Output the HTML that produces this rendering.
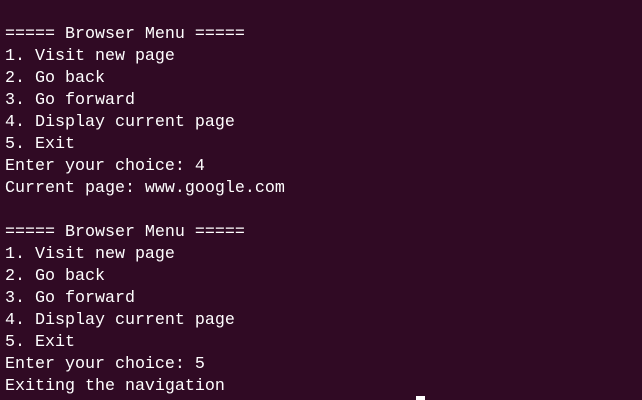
<!DOCTYPE html>
<html><head><meta charset="utf-8"><style>
html,body{margin:0;padding:0;background:#300a24;width:642px;height:400px;overflow:hidden}
pre{margin:0;padding:24px 0 0 5px;font-family:"Liberation Mono","DejaVu Sans Mono",monospace;font-size:16.67px;line-height:22px;color:#ffffff}
.cur{position:absolute;left:416px;top:396px;width:9px;height:4px;background:#fff}
</style></head><body>
<pre>===== Browser Menu =====
1. Visit new page
2. Go back
3. Go forward
4. Display current page
5. Exit
Enter your choice: 4
Current page: www.google.com

===== Browser Menu =====
1. Visit new page
2. Go back
3. Go forward
4. Display current page
5. Exit
Enter your choice: 5
Exiting the navigation</pre>
<div class="cur"></div>
</body></html>
